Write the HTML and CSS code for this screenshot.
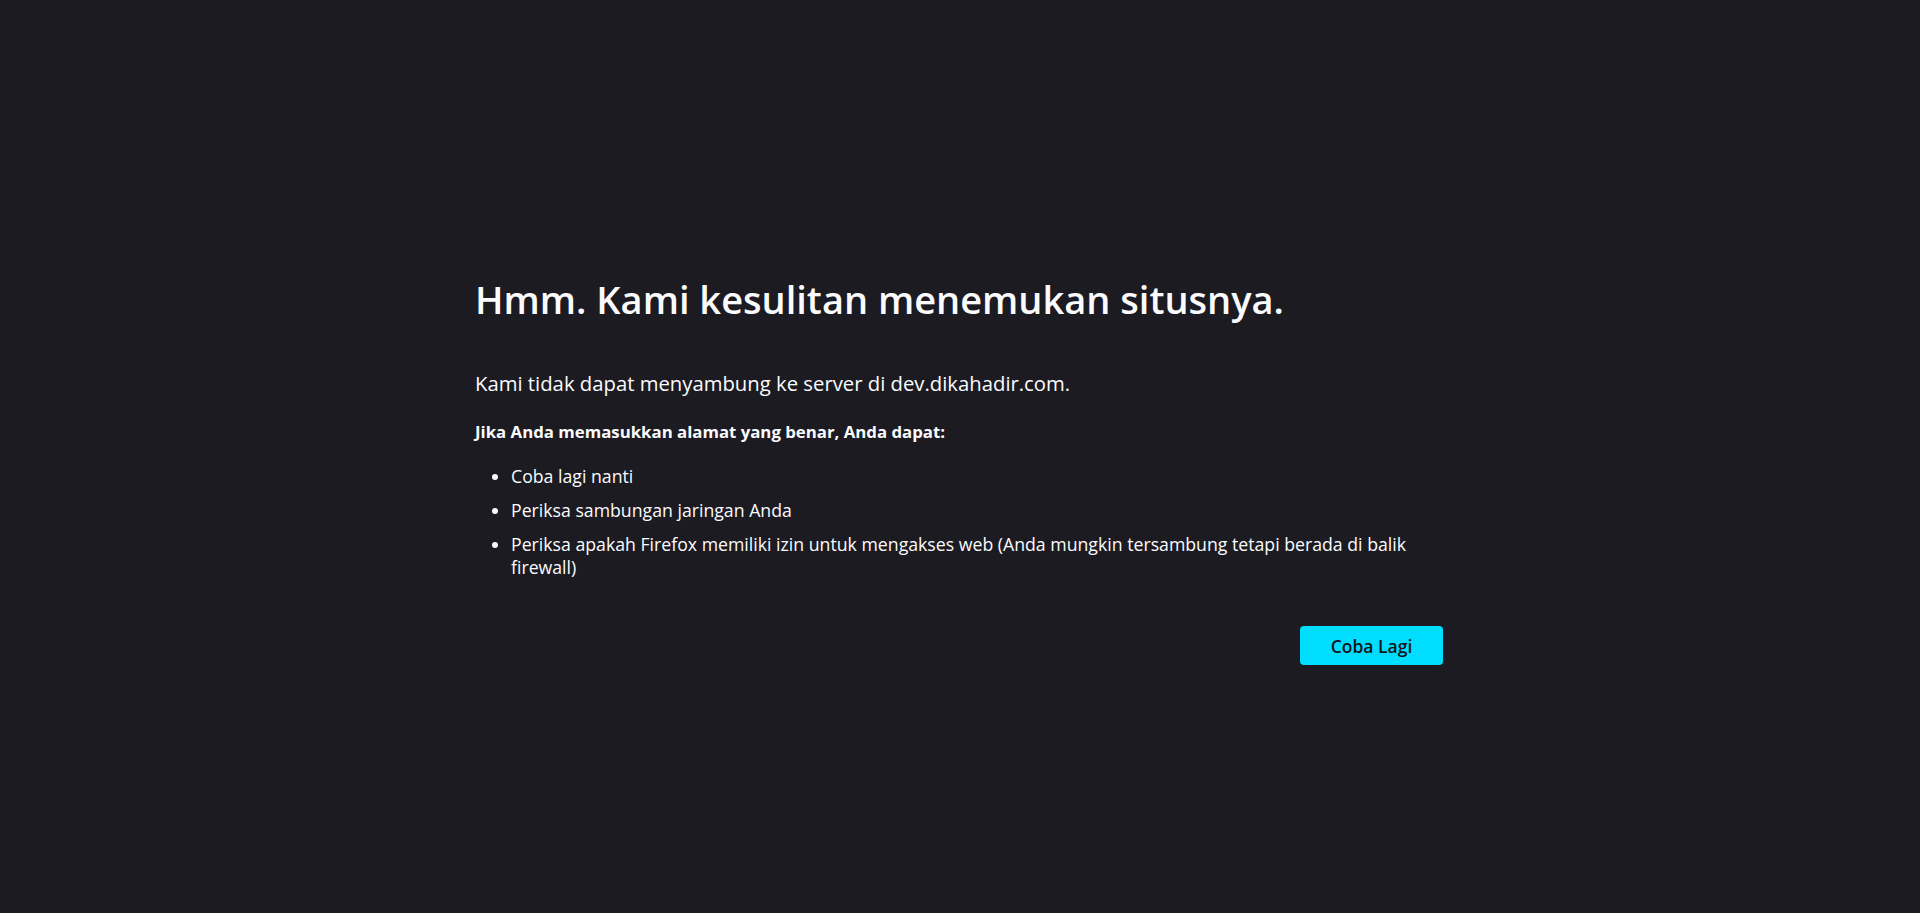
FILE: index.html
```html
<!DOCTYPE html>
<html lang="id">
<head>
<meta charset="utf-8">
<title>Masalah memuat halaman</title>
<link rel="stylesheet" href="styles.css">
</head>
<body>
<main class="page">
  <div class="container">
    <h1 class="title">Hmm. Kami kesulitan menemukan situsnya.</h1>
    <p class="intro">Kami tidak dapat menyambung ke server di dev.dikahadir.com.</p>
    <p class="hint">Jika Anda memasukkan alamat yang benar, Anda dapat:</p>
    <ul class="tips">
      <li>Coba lagi nanti</li>
      <li>Periksa sambungan jaringan Anda</li>
      <li>Periksa apakah Firefox memiliki izin untuk mengakses web (Anda mungkin tersambung tetapi berada di balik firewall)</li>
    </ul>
    <div class="actions">
      <button class="retry" type="button">Coba Lagi</button>
    </div>
  </div>
</main>
</body>
</html>
```

FILE: styles.css
```css
html, body {
  margin: 0;
  padding: 0;
  height: 100%;
}
body {
  background: #1c1b22;
  color: #fbfbfe;
  font-family: "Open Sans", "Noto Sans", sans-serif;
}
.page {
  padding-top: 275px;
}
.container {
  width: 970px;
  margin: 0 auto;
}
.title {
  margin: 0;
  font-size: 38px;
  font-weight: 600;
  line-height: 48px;
}
.intro {
  margin: 46px 0 0;
  font-size: 20.3px;
  line-height: 28px;
}
.hint {
  margin: 24px 0 0;
  font-size: 16.8px;
  font-weight: 700;
  line-height: 22px;
}
.tips {
  margin: 22px 0 0;
  padding-left: 36px;
  font-size: 17.7px;
  line-height: 23px;
}
.tips li {
  margin-bottom: 11px;
}
.tips li:last-child {
  margin-bottom: 0;
}
.actions {
  display: flex;
  justify-content: flex-end;
  margin-top: 47px;
  padding-right: 2px;
}
.retry {
  width: 143px;
  height: 39px;
  border: none;
  border-radius: 4px;
  background: #00ddff;
  color: #15141a;
  font-family: inherit;
  font-size: 17.5px;
  font-weight: 600;
}
```
